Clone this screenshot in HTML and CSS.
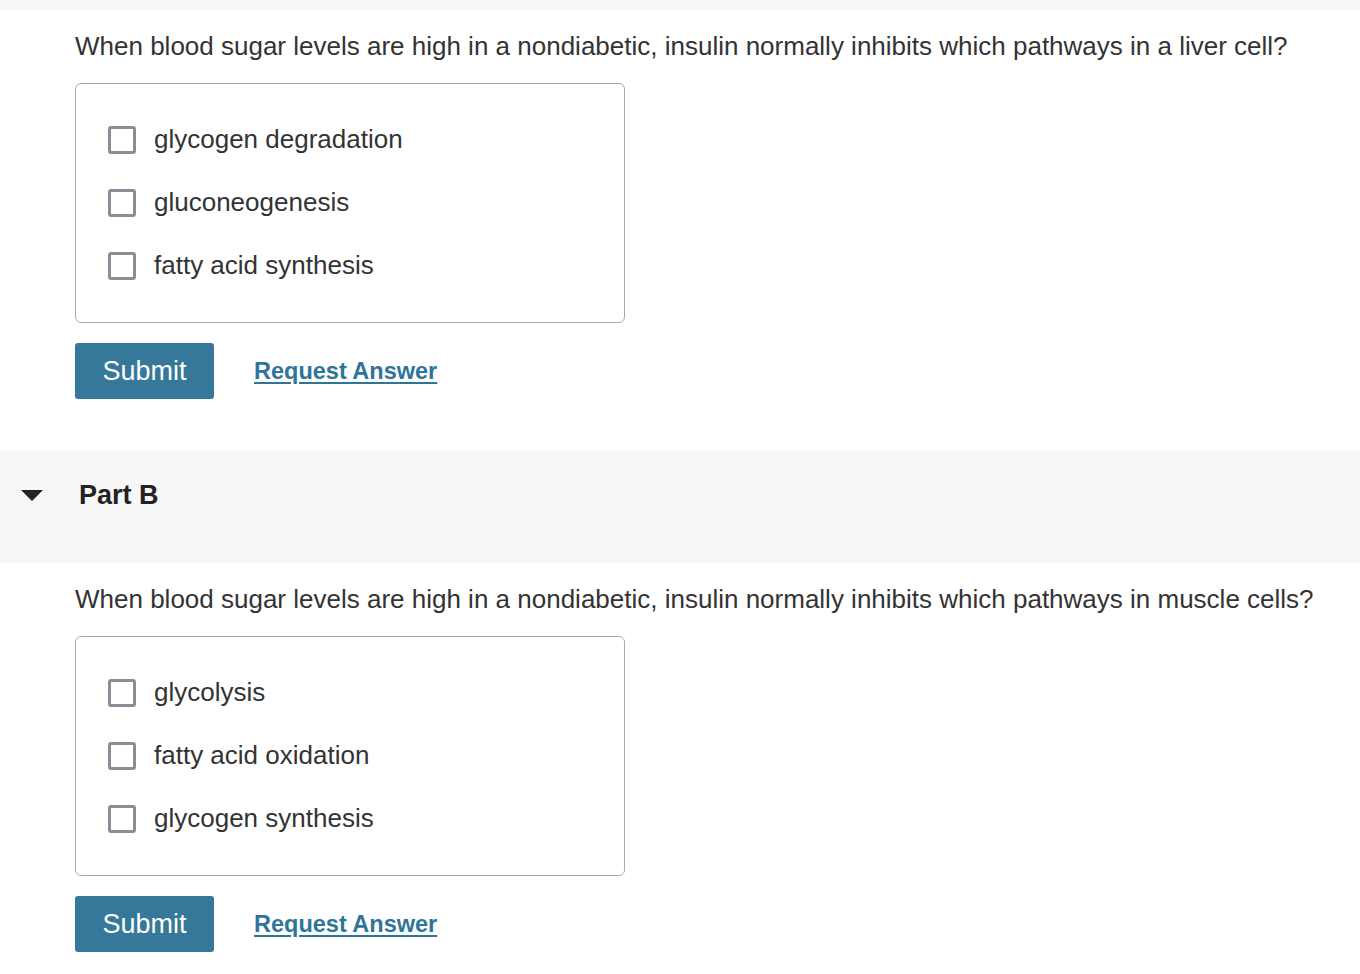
FILE: index.html
```html
<!DOCTYPE html>
<html lang="en">
<head>
    <meta charset="UTF-8">
    <meta name="viewport" content="width=device-width, initial-scale=1.0">
    <title>Part A / Part B</title>
    <link rel="stylesheet" href="styles.css">
</head>
<body>
    <div class="top-strip"></div>

    <div class="part-body">
        <p class="question">When blood sugar levels are high in a nondiabetic, insulin normally inhibits which pathways in a liver cell?</p>
        <div class="choices">
            <label class="choice"><span class="check"></span>glycogen degradation</label>
            <label class="choice"><span class="check"></span>gluconeogenesis</label>
            <label class="choice"><span class="check"></span>fatty acid synthesis</label>
        </div>
        <div class="actions">
            <button class="submit">Submit</button>
            <a class="request" href="#">Request Answer</a>
        </div>
    </div>

    <div class="part-head">
        <span class="caret"></span>
        <h2>Part B</h2>
    </div>

    <div class="part-body">
        <p class="question">When blood sugar levels are high in a nondiabetic, insulin normally inhibits which pathways in muscle cells?</p>
        <div class="choices">
            <label class="choice"><span class="check"></span>glycolysis</label>
            <label class="choice"><span class="check"></span>fatty acid oxidation</label>
            <label class="choice"><span class="check"></span>glycogen synthesis</label>
        </div>
        <div class="actions">
            <button class="submit">Submit</button>
            <a class="request" href="#">Request Answer</a>
        </div>
    </div>
</body>
</html>
```

FILE: styles.css
```css
body{
    margin: 0;
    font-family: "Liberation Sans", Arial, sans-serif;
    color: #333;
    background: #fff;
}

.top-strip{
    height: 10px;
    background: #f7f7f7;
}

.part-body{
    padding: 19px 0 0 75px;
}

.question{
    margin: 0;
    font-size: 26px;
    line-height: 34px;
}

.choices{
    box-sizing: border-box;
    width: 550px;
    margin-top: 20px;
    padding: 24px 0 25px 32px;
    border: 1px solid #a9a9a9;
    border-radius: 6px;
    display: flex;
    flex-direction: column;
}

.choice{
    display: flex;
    align-items: center;
    height: 63px;
    font-size: 26px;
    color: #333;
}

.check{
    box-sizing: border-box;
    width: 28px;
    height: 28px;
    border: 3px solid #8c8c96;
    border-radius: 3px;
    margin-right: 18px;
}

.actions{
    display: flex;
    align-items: center;
    gap: 40px;
    margin-top: 20px;
}

.submit{
    width: 139px;
    height: 56px;
    border: none;
    border-radius: 3px;
    background: #367899;
    color: #fff;
    font-family: inherit;
    font-size: 27px;
    cursor: pointer;
}

.request{
    color: #2f7599;
    font-weight: bold;
    font-size: 23.5px;
    text-decoration: underline;
    text-underline-offset: 3px;
}

.part-head{
    box-sizing: border-box;
    margin-top: 52px;
    height: 112px;
    padding-top: 28px;
    background: #f7f7f7;
    display: flex;
    align-items: flex-start;
}

.caret{
    width: 0;
    height: 0;
    border-left: 11px solid transparent;
    border-right: 11px solid transparent;
    border-top: 11px solid #222;
    margin: 11px 36px 0 21px;
}

.part-head h2{
    margin: 0;
    font-size: 27px;
    line-height: 32px;
    font-weight: bold;
    color: #222;
}
```
